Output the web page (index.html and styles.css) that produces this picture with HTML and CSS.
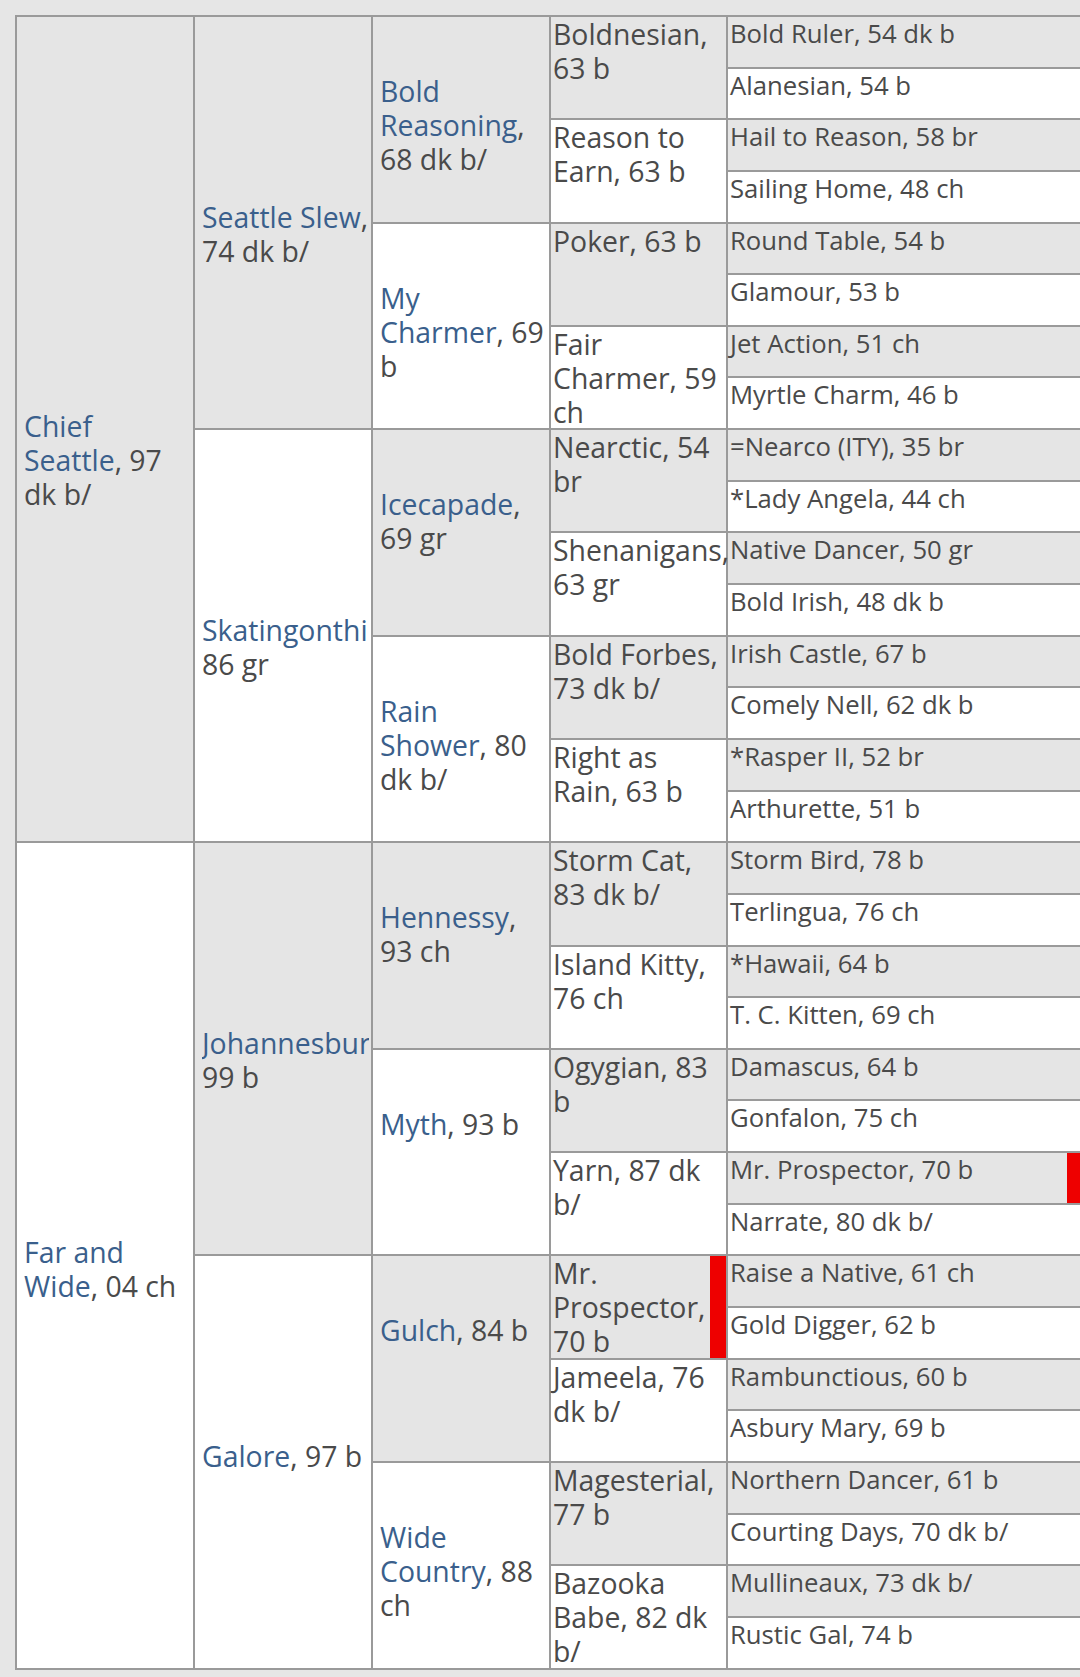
FILE: index.html
```html
<!DOCTYPE html>
<html lang="en">
<head>
<meta charset="utf-8">
<title>Far and Wide pedigree</title>
<link rel="stylesheet" href="styles.css">
</head>
<body>
<table class="pedigree">
  <colgroup>
    <col class="w1"><col class="w2"><col class="w3"><col class="w4"><col class="w5">
  </colgroup>
  <tbody>
    <tr>
      <td class="c1 sh" rowspan="16"><div class="in"><a href="#">Chief Seattle</a>, 97 dk b/</div></td>
      <td class="c2 sh" rowspan="8"><div class="in"><a href="#">Seattle Slew</a>, 74 dk b/</div></td>
      <td class="c3 sh" rowspan="4"><div class="in"><a href="#">Bold Reasoning</a>, 68 dk b/</div></td>
      <td class="c4 sh" rowspan="2"><div class="in">Boldnesian, 63 b</div></td>
      <td class="c5 sh">Bold Ruler, 54 dk b</td>
    </tr>
    <tr><td class="c5">Alanesian, 54 b</td></tr>
    <tr>
      <td class="c4" rowspan="2"><div class="in">Reason to Earn, 63 b</div></td>
      <td class="c5 sh">Hail to Reason, 58 br</td>
    </tr>
    <tr><td class="c5">Sailing Home, 48 ch</td></tr>
    <tr>
      <td class="c3" rowspan="4"><div class="in"><a href="#">My Charmer</a>, 69 b</div></td>
      <td class="c4 sh" rowspan="2"><div class="in">Poker, 63 b</div></td>
      <td class="c5 sh">Round Table, 54 b</td>
    </tr>
    <tr><td class="c5">Glamour, 53 b</td></tr>
    <tr>
      <td class="c4" rowspan="2"><div class="in">Fair Charmer, 59 ch</div></td>
      <td class="c5 sh">Jet Action, 51 ch</td>
    </tr>
    <tr><td class="c5">Myrtle Charm, 46 b</td></tr>
    <tr>
      <td class="c2" rowspan="8"><div class="in"><a href="#">Skatingonthin</a>, 86 gr</div></td>
      <td class="c3 sh" rowspan="4"><div class="in"><a href="#">Icecapade</a>, 69 gr</div></td>
      <td class="c4 sh" rowspan="2"><div class="in">Nearctic, 54 br</div></td>
      <td class="c5 sh">=Nearco (ITY), 35 br</td>
    </tr>
    <tr><td class="c5">*Lady Angela, 44 ch</td></tr>
    <tr>
      <td class="c4" rowspan="2"><div class="in">Shenanigans, 63 gr</div></td>
      <td class="c5 sh">Native Dancer, 50 gr</td>
    </tr>
    <tr><td class="c5">Bold Irish, 48 dk b</td></tr>
    <tr>
      <td class="c3" rowspan="4"><div class="in"><a href="#">Rain Shower</a>, 80 dk b/</div></td>
      <td class="c4 sh" rowspan="2"><div class="in">Bold Forbes, 73 dk b/</div></td>
      <td class="c5 sh">Irish Castle, 67 b</td>
    </tr>
    <tr><td class="c5">Comely Nell, 62 dk b</td></tr>
    <tr>
      <td class="c4" rowspan="2"><div class="in">Right as Rain, 63 b</div></td>
      <td class="c5 sh">*Rasper II, 52 br</td>
    </tr>
    <tr><td class="c5">Arthurette, 51 b</td></tr>

    <tr>
      <td class="c1" rowspan="16"><div class="in"><a href="#">Far and Wide</a>, 04 ch</div></td>
      <td class="c2 sh" rowspan="8"><div class="in"><a href="#">Johannesburg</a>, 99 b</div></td>
      <td class="c3 sh" rowspan="4"><div class="in"><a href="#">Hennessy</a>, 93 ch</div></td>
      <td class="c4 sh" rowspan="2"><div class="in">Storm Cat, 83 dk b/</div></td>
      <td class="c5 sh">Storm Bird, 78 b</td>
    </tr>
    <tr><td class="c5">Terlingua, 76 ch</td></tr>
    <tr>
      <td class="c4" rowspan="2"><div class="in">Island Kitty, 76 ch</div></td>
      <td class="c5 sh">*Hawaii, 64 b</td>
    </tr>
    <tr><td class="c5">T. C. Kitten, 69 ch</td></tr>
    <tr>
      <td class="c3" rowspan="4"><div class="in"><a href="#">Myth</a>, 93 b</div></td>
      <td class="c4 sh" rowspan="2"><div class="in">Ogygian, 83 b</div></td>
      <td class="c5 sh">Damascus, 64 b</td>
    </tr>
    <tr><td class="c5">Gonfalon, 75 ch</td></tr>
    <tr>
      <td class="c4" rowspan="2"><div class="in">Yarn, 87 dk b/</div></td>
      <td class="c5 sh dup">Mr. Prospector, 70 b</td>
    </tr>
    <tr><td class="c5">Narrate, 80 dk b/</td></tr>
    <tr>
      <td class="c2" rowspan="8"><div class="in"><a href="#">Galore</a>, 97 b</div></td>
      <td class="c3 sh" rowspan="4"><div class="in"><a href="#">Gulch</a>, 84 b</div></td>
      <td class="c4 sh dup" rowspan="2"><div class="in">Mr. Prospector, 70 b</div></td>
      <td class="c5 sh">Raise a Native, 61 ch</td>
    </tr>
    <tr><td class="c5">Gold Digger, 62 b</td></tr>
    <tr>
      <td class="c4" rowspan="2"><div class="in">Jameela, 76 dk b/</div></td>
      <td class="c5 sh">Rambunctious, 60 b</td>
    </tr>
    <tr><td class="c5">Asbury Mary, 69 b</td></tr>
    <tr>
      <td class="c3" rowspan="4"><div class="in"><a href="#">Wide Country</a>, 88 ch</div></td>
      <td class="c4 sh" rowspan="2"><div class="in">Magesterial, 77 b</div></td>
      <td class="c5 sh">Northern Dancer, 61 b</td>
    </tr>
    <tr><td class="c5">Courting Days, 70 dk b/</td></tr>
    <tr>
      <td class="c4" rowspan="2"><div class="in">Bazooka Babe, 82 dk b/</div></td>
      <td class="c5 sh">Mullineaux, 73 dk b/</td>
    </tr>
    <tr><td class="c5">Rustic Gal, 74 b</td></tr>
  </tbody>
</table>
</body>
</html>
```
FILE: styles.css
```css
html {
  overflow: hidden;
  background: #e6e6e6;
}
body {
  margin: 0;
  padding: 15px 0 0 15px;
  background: #e6e6e6;
  font-family: "Open Sans", "DejaVu Sans", sans-serif;
  color: #4a4a4a;
}
.pedigree {
  border-collapse: collapse;
  table-layout: fixed;
  width: 1070px;
  border: 2px solid #9a9a9a;
  background: #fff;
}
.w1, .w2, .w3 { width: 178px; }
.w4 { width: 177px; }
.w5 { width: 357px; }

.pedigree tr { height: 51.65px; }

.pedigree td {
  border: 2px solid #9a9a9a;
  background: #fff;
  font-size: 28.4px;
  line-height: 34px;
  padding: 0;
  vertical-align: top;
}
.pedigree td.sh { background: #e5e5e5; }

.in {
  overflow: hidden;
  padding: 3px 0;
}

.pedigree a {
  color: #3a5f8c;
  text-decoration: none;
}

.pedigree .c1, .pedigree .c2, .pedigree .c3 {
  padding-left: 7px;
  padding-right: 2px;
}
.pedigree .c1 { padding-top: 389px; }
.pedigree .c2 { padding-top: 180px; }
.pedigree .c3 { padding-top: 54px; }

.pedigree .c4 {
  padding: 0 2px 0 2px;
}
.pedigree .c4 .in {
  overflow: visible;
  padding: 0;
  max-height: 100px;
}
.pedigree .c5 {
  font-size: 25.7px;
  line-height: 31px;
  padding: 1px 2px 0 2px;
  white-space: nowrap;
}
.dup { box-shadow: inset -16px 0 0 #ee0000; }
```
